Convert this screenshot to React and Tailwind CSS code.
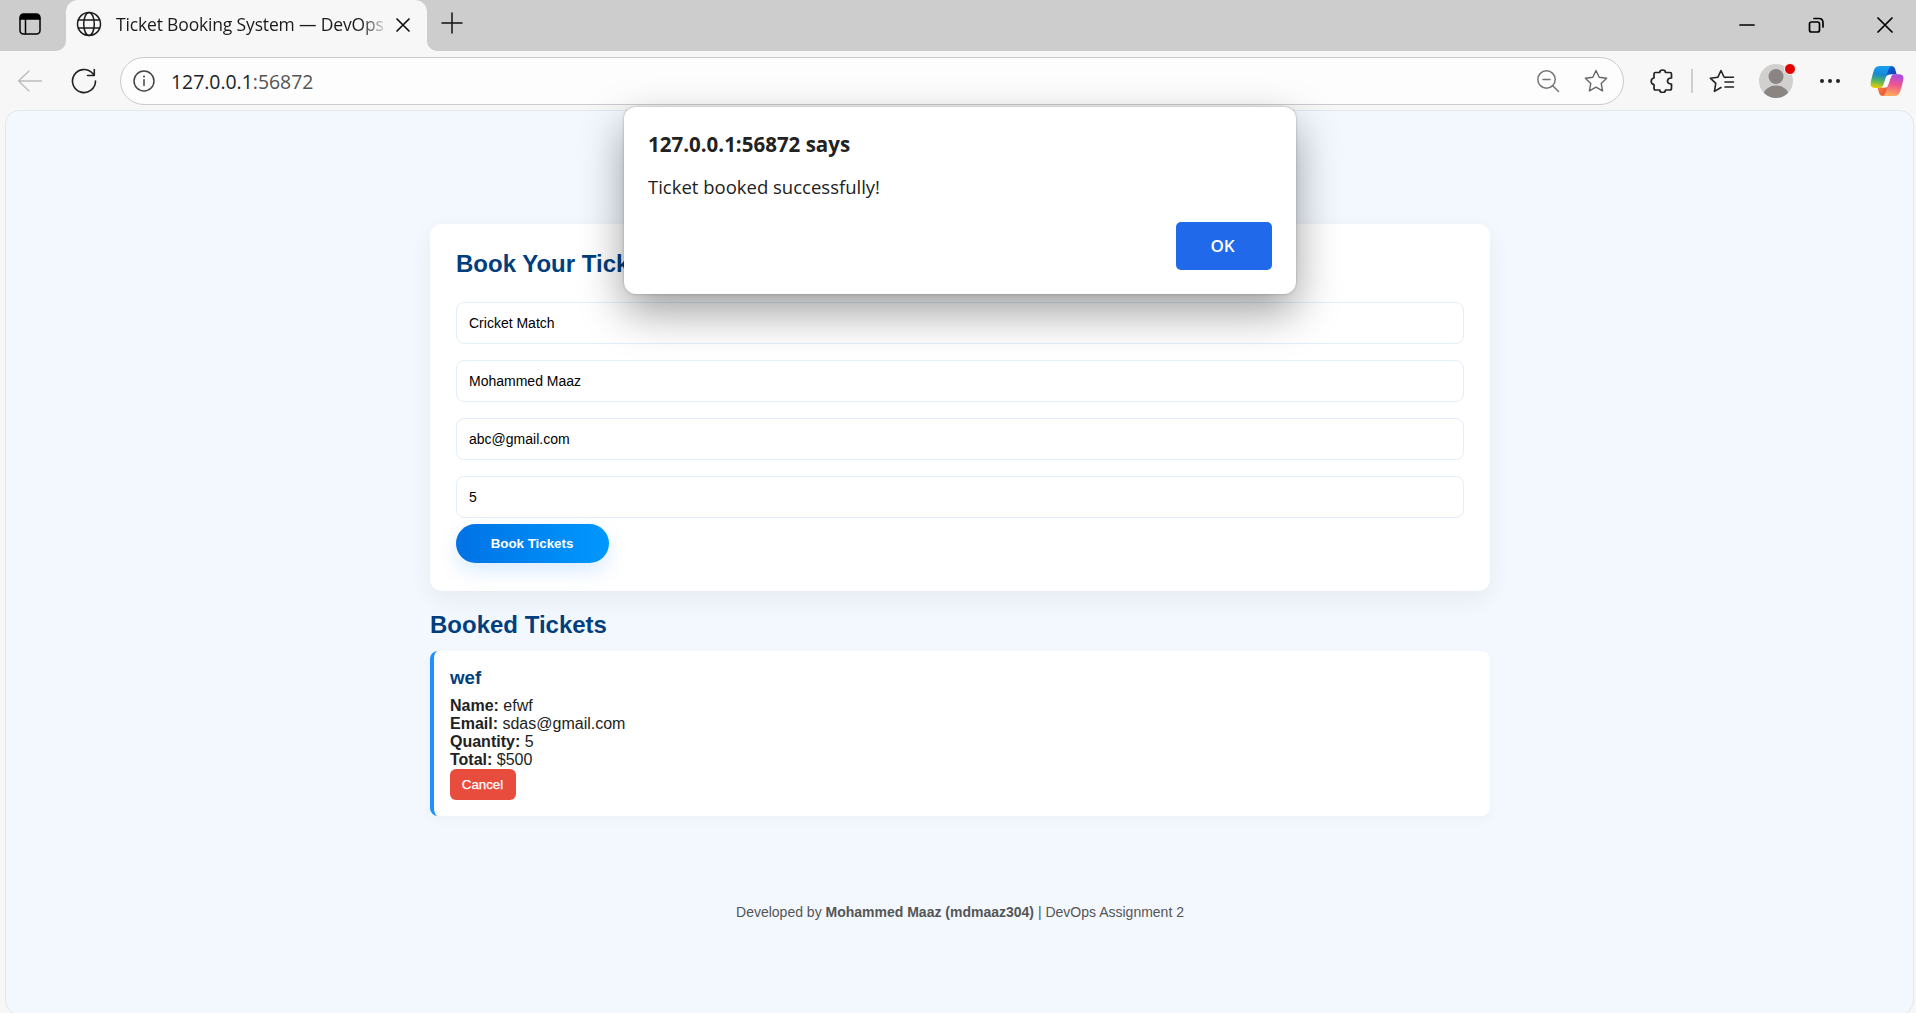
import React from 'react';

const ARIAL = "font-['Liberation_Sans',Arial,sans-serif]";
const UI = "font-['Open_Sans','Noto_Sans',sans-serif]";

function Icon({ w = 24, h = w, vb, stroke = '#222', sw = 1.4, className = '', children }) {
  return (
    <svg width={w} height={h} viewBox={vb || `0 0 ${w} ${h}`} fill="none" stroke={stroke} strokeWidth={sw}
      strokeLinecap="round" strokeLinejoin="round" className={`block shrink-0 ${className}`}>
      {children}
    </svg>
  );
}

function TabStrip() {
  return (
    <div className="flex h-[51px] bg-[#cdcdcd] items-start">
      <div className="w-[66px] h-[51px] pl-[19px] pt-[13px]">
        <Icon w={22} stroke="#000" sw={1.5}>
          <rect x="1" y="1" width="20" height="20" rx="3.5" />
          <path d="M1 6V4.500Q1 1 4.500 1H17.500Q21 1 21 4.500V6Z" fill="#000" stroke="none" />
          <path d="M1 6H21M6.500 6V21" />
        </Icon>
      </div>
      <div className="relative flex items-center w-[361px] h-[51px] rounded-t-[12px] bg-[#f7f7f7]">
        <svg className="absolute -left-[10px] bottom-0" width="10" height="10"><path d="M10 0A10 10 0 0 1 0 10H10Z" fill="#f7f7f7" /></svg>
        <svg className="absolute -right-[10px] bottom-0" width="10" height="10"><path d="M0 0A10 10 0 0 0 10 10H0Z" fill="#f7f7f7" /></svg>
        <Icon w={26} className="ml-[10px] -mt-[3px]" stroke="#1b1b1b" sw={1.5}>
          <circle cx="13" cy="13" r="11.500" />
          <ellipse cx="13" cy="13" rx="5.300" ry="11.500" />
          <path d="M2.500 9H23.500M2.500 17H23.500" />
        </Icon>
        <div className="ml-[14px] -mt-[4px] w-[269px] whitespace-nowrap text-[17.500px] leading-6 tracking-[-0.16px] text-[#1b1b1b] [mask-image:linear-gradient(to_right,#000_91%,rgba(0,0,0,0.15)_100%)]">
          Ticket Booking System — DevOps
        </div>
        <Icon w={14} className="ml-[11px] -mt-[2px]" stroke="#111" sw={1.7}><path d="M1 1L13 13M13 1L1 13" /></Icon>
      </div>
      <Icon w={22} className="ml-[14px] mt-[12px]" stroke="#111" sw={1.5}><path d="M11 1V21M1 11H21" /></Icon>
      <div className="ml-auto flex mr-[23px] mt-[17px]">
        <Icon w={16} stroke="#000" sw={1.7} className="mr-[53px]"><path d="M1 8H15" /></Icon>
        <Icon w={16} stroke="#000" sw={1.7} className="mr-[53px]">
          <rect x="1.500" y="5" width="10" height="10" rx="2" />
          <path d="M6 1.500H11Q15 1.500 15 6V10" />
        </Icon>
        <Icon w={16} stroke="#000" sw={1.7}><path d="M1 1L15 15M15 1L1 15" /></Icon>
      </div>
    </div>
  );
}

function Copilot() {
  return (
    <svg width="34" height="32" viewBox="0 0 34 32" className="block shrink-0">
      <defs>
        <linearGradient id="cpA" x1="0.3" y1="0" x2="0.15" y2="1">
          <stop offset="0" stopColor="#16a0ee" /><stop offset=".35" stopColor="#1688d4" /><stop offset=".65" stopColor="#55b45c" /><stop offset="1" stopColor="#f8d000" />
        </linearGradient>
        <linearGradient id="cpB" x1="0.8" y1="0" x2="0.6" y2="1">
          <stop offset="0" stopColor="#a44bea" /><stop offset=".5" stopColor="#ee5690" /><stop offset="1" stopColor="#ffa75a" />
        </linearGradient>
        <linearGradient id="cpC" x1="0" y1="0" x2="1" y2="1">
          <stop offset="0" stopColor="#0f62df" /><stop offset="1" stopColor="#123fae" />
        </linearGradient>
        <linearGradient id="cpD" x1="0" y1="0" x2="1" y2="1">
          <stop offset="0" stopColor="#f58a3c" /><stop offset="1" stopColor="#e8433f" />
        </linearGradient>
      </defs>
      <path d="M17 1H21Q24.200 1 25.200 4.200L26.700 9.500H20Q17.500 9.500 15.800 11.500Z" fill="url(#cpC)" />
      <path d="M17 31H13Q10 31 9 27.800L7.500 22.500H13Q16 22.500 18 20Z" fill="url(#cpD)" />
      <path d="M10 1H21.500Q19.300 2 18.300 5L13.300 20Q12.300 23 9 23H5Q-.3 23 .7 17.500Q1.800 11.500 4 5Q5.400 1 10 1Z" fill="url(#cpA)" />
      <path d="M24 31H12.500Q14.700 30 15.700 27L20.700 12.500Q21.800 9.300 25 9.300H29Q34.300 9.300 33.300 14.500Q32.200 20.500 30 27Q28.600 31 24 31Z" fill="url(#cpB)" />
      <path d="M17.200 11.500Q17.800 9.800 19.500 9.700H22.500Q21.200 10.500 20.500 12.800L17.700 21Q17 22.500 15.500 22.500H11.500Q13 22 13.700 20Z" fill="#fbfbfb" />
    </svg>
  );
}

const STAR = 'M12 1.500L15.200 8.300L22.700 9.200L17.200 14.400L18.600 21.900L12 18.200L5.400 21.900L6.800 14.400L1.300 9.200L8.800 8.300Z';

function Toolbar() {
  return (
    <div className="flex h-[59px] items-center bg-[#f7f7f7] pt-[1px]">
      <Icon w={26} h={24} stroke="#bdbdbd" className="ml-[17px]"><path d="M24.500 12H1.500M12 2L1.500 12L12 22" /></Icon>
      <Icon w={26} className="ml-[28px]" stroke="#222" sw={1.6}>
        <path d="M24.500 13A11.500 11.500 0 1 1 21.500 5.300L23 7M23.300 1.500V7.500H16.500" />
      </Icon>
      <div className="ml-[23px] flex h-[48px] w-[1504px] items-center rounded-full border border-[#cbcbcb] bg-[#fdfdfd]">
        <Icon w={22} className="ml-[12px]" stroke="#444" sw={1.5}>
          <circle cx="11" cy="11" r="10" /><path d="M11 9.800V15.500" /><path d="M11 6.500V6.600" strokeWidth="2" />
        </Icon>
        <div className="ml-[16px] mt-[1px] text-[19.400px] leading-6 text-[#222]">127.0.0.1<span className="text-[#555]">:56872</span></div>
        <Icon w={24} className="ml-auto mr-[24px]" stroke="#757575" sw={1.5}>
          <circle cx="10.500" cy="10.500" r="8.700" /><path d="M7 10.500H14M17 17L22.500 22.500" />
        </Icon>
        <Icon w={24} className="mr-[15px]" stroke="#666" sw={1.4}><path d={STAR} /></Icon>
      </div>
      <Icon w={24} className="ml-[26px]" stroke="#222" sw={1.7}>
        <path d="M5.500 3.500H9.700Q9.700 1 12.700 1Q15.500 1 15.500 3.500H20Q21.500 3.500 21.500 5V9H20.500Q17.500 9.500 17.500 12Q17.500 14.500 20.500 15H21.500V19Q21.500 21 20 21H15.500Q15.500 23.500 12.700 23.500Q9.700 23.500 9.700 21H5.500Q4 21 4 19V15.500Q1.200 15 1.200 12.200Q1.200 9.500 4 9V5Q4 3.500 5.500 3.500Z" />
      </Icon>
      <div className="ml-[17px] h-[24px] w-[2px] bg-[#cfcfcf]" />
      <Icon w={26} h={24} className="ml-[16px]" stroke="#222" sw={1.6}>
        <path d="M16.500 8.500L15 8L12 1.500L8.800 8.300L1.300 9.200L6.800 14.400L5.400 22.400L12 18.500M16 8.300H24.500M16 13H24.500M16 18H24.500" />
      </Icon>
      <div className="relative ml-[24px] h-[34px] w-[34px]">
        <svg width="34" height="34" className="block">
          <defs><clipPath id="av"><circle cx="17" cy="17" r="17" /></clipPath></defs>
          <g clipPath="url(#av)"><rect width="34" height="34" fill="#d2d0ce" /><circle cx="17" cy="12.500" r="7.500" fill="#8a8583" /><ellipse cx="17" cy="33" rx="13" ry="11.500" fill="#8a8583" /></g>
        </svg>
        <div className="absolute -right-[3px] -top-[1px] h-[12px] w-[12px] rounded-full border border-[#f7f7f7] bg-[#e00000]" />
      </div>
      <div className="ml-[27px] flex gap-[4px]">
        {[0, 1, 2].map((i) => <div key={i} className="h-[4px] w-[4px] rounded-full bg-[#222]" />)}
      </div>
      <div className="ml-[30px]"><Copilot /></div>
    </div>
  );
}

const fields = ['Cricket Match', 'Mohammed Maaz', 'abc@gmail.com', '5'];
const details = [['Name:', 'efwf'], ['Email:', 'sdas@gmail.com'], ['Quantity:', '5'], ['Total:', '$500']];

function BookingPage() {
  return (
    <div className={`mx-[5px] mr-[2px] h-[905px] overflow-hidden rounded-[14px] border border-[#e4e7eb] bg-[#f3f8ff] pt-[113px] ${ARIAL}`}>
      <div className="mx-auto w-[1060px]">
        <section className="h-[367px] rounded-[12px] bg-white px-[26px] pt-[26px] shadow-[0_8px_24px_rgba(0,0,0,0.06)]">
          <h2 className="pl-[0.5px] text-[24px] font-bold leading-7 text-[#023e7d]">Book Your Ticket</h2>
          <div className="mt-[24px] flex flex-col gap-4">
            {fields.map((f) => (
              <div key={f} className="flex h-[42px] items-center rounded-[8px] border border-[#e3edfb] px-[12.500px] text-[14px] text-black">{f}</div>
            ))}
          </div>
          <button className="mt-[6px] block h-[39px] w-[153px] rounded-full bg-[linear-gradient(90deg,#0072e5,#0098ff)] text-[13.333px] font-bold text-white shadow-[0_8px_20px_rgba(0,123,255,0.15)]">Book Tickets</button>
        </section>
        <h2 className="mt-[20px] pl-[0.5px] text-[24px] font-bold leading-7 text-[#023e7d]">Booked Tickets</h2>
        <section className="mt-[12px] h-[165px] rounded-[8px] border-l-4 border-[#1e90ff] bg-white pl-4 pt-4 text-[16px] leading-[18px] text-[#222] shadow-[0_4px_12px_rgba(0,0,0,0.03)]">
          <h3 className="pl-[0.5px] text-[18.720px] font-bold leading-[21px] text-[#023e7d]">wef</h3>
          <div className="mt-[9px] pl-[0.5px]">
            {details.map(([k, v]) => <div key={k}><b>{k}</b> {v}</div>)}
          </div>
          <button className="block h-[31px] w-[66px] rounded-[6px] bg-[#e74c3c] text-[13.333px] text-white [-webkit-text-stroke:0.25px_white]">Cancel</button>
        </section>
        <footer className="mt-[88px] pl-px text-center text-[14px] leading-4 text-[#555]">
          Developed by <b>Mohammed Maaz (mdmaaz304)</b> | DevOps Assignment 2
        </footer>
      </div>
    </div>
  );
}

function AlertDialog() {
  return (
    <div className="absolute left-[624px] top-[107px] flex h-[187px] w-[672px] flex-col rounded-[12px] bg-white px-6 pt-[23px] text-[#222] shadow-[0_0_3px_rgba(0,0,0,0.25),0_18px_44px_rgba(0,0,0,0.38)]">
      <div className="text-[20.500px] font-bold leading-7">127.0.0.1:56872 says</div>
      <div className="mt-[15px] text-[18.500px] leading-7">Ticket booked successfully!</div>
      <button className="mt-[21px] h-[48px] w-[96px] self-end rounded-[5px] bg-[#2169eb] pr-[3px] text-[17px] font-semibold text-white">OK</button>
    </div>
  );
}

export default function App() {
  return (
    <div className={`relative h-[1013px] w-[1916px] overflow-hidden bg-[#f7f7f7] ${UI}`}>
      <TabStrip />
      <Toolbar />
      <BookingPage />
      <AlertDialog />
    </div>
  );
}
